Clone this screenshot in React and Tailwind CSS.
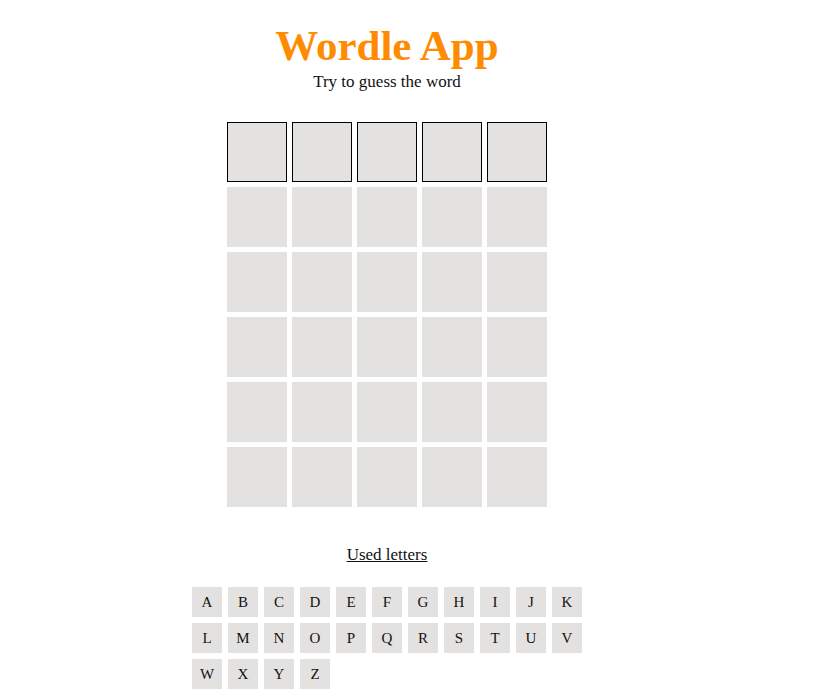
import React from 'react';

const ROWS = 6;
const COLS = 5;
const letters = 'ABCDEFGHIJKLMNOPQRSTUVWXYZ'.split('');

const Tile = ({ active }) => (
    <div className={`w-[60px] h-[60px] bg-[#e3e2e1] ${active ? 'border border-black' : ''}`} />
);

const App = () => {
    return (
        <div className="w-[774px] flex flex-col items-center text-[#111] font-['Liberation_Serif','DejaVu_Serif',serif]">
            <h1 className="mt-[20px] text-[43px] leading-[52px] font-bold text-[#ff8c00]">Wordle App</h1>
            <p className="text-[17px] leading-[18px] mt-[1px]">Try to guess the word</p>

            <div className="mt-[31px] flex flex-col gap-[5px]">
                {Array.from({ length: ROWS }).map((_, r) => (
                    <div key={r} className="flex gap-[5px]">
                        {Array.from({ length: COLS }).map((_, c) => (
                            <Tile key={c} active={r === 0} />
                        ))}
                    </div>
                ))}
            </div>

            <p className="mt-[38px] text-[17px] leading-[20px] underline">Used letters</p>

            <div className="mt-[22px] w-[390px] grid grid-cols-11 gap-[6px]">
                {letters.map((l) => (
                    <div key={l} className="w-[30px] h-[30px] bg-[#e3e2e1] flex items-center justify-center text-[15px]">
                        {l}
                    </div>
                ))}
            </div>
        </div>
    );
};

export default App;
